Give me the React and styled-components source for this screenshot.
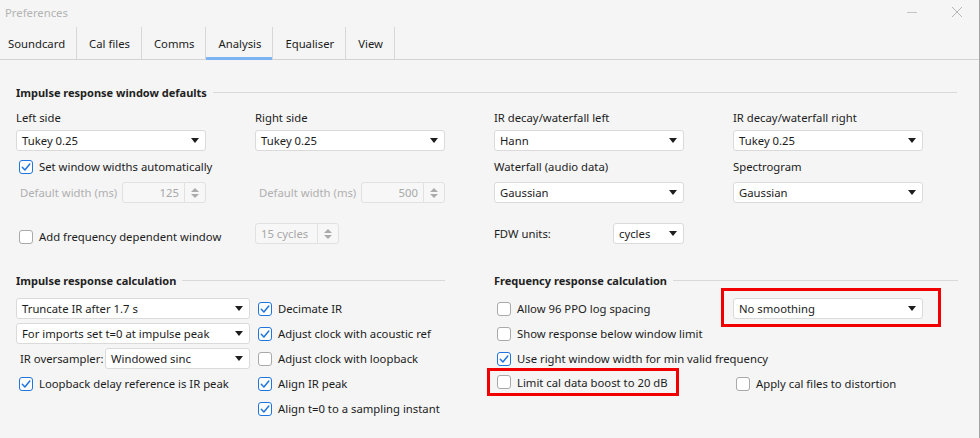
import React from "react";
import styled, { createGlobalStyle, css } from "styled-components";

const GlobalStyle = createGlobalStyle`
  html, body {
    margin: 0;
    padding: 0;
    background: #f5f5f5;
  }
  body {
    font-family: "Noto Sans", "Open Sans", sans-serif;
    font-size: 11.3px;
    color: #1c1c1c;
  }
`;

const Window = styled.div`
  width: 980px;
  height: 438px;
  box-sizing: border-box;
  background: #f5f5f5;
  border-right: 1px solid #a3a3a3;
  overflow: hidden;
`;

const TitleBar = styled.div`
  height: 27px;
  box-sizing: border-box;
  display: flex;
  align-items: center;
  justify-content: space-between;
  padding: 0 16px 3px 5px;
`;

const Title = styled.span`
  color: #b3b3b3;
`;

const WinButtons = styled.div`
  display: flex;
  align-items: center;
  gap: 33px;
`;

const Tabs = styled.div`
  display: flex;
  height: 33px;
  border-bottom: 1px solid #d3d3d3;
  box-sizing: border-box;
`;

const Tab = styled.div`
  position: relative;
  display: flex;
  align-items: center;
  padding: 0 11px 0 12px;
  border-right: 1px solid #d7d7d7;
  color: #1c1c1c;

  &:first-child {
    padding-left: 8px;
  }

  ${(p) =>
    p.$active &&
    css`
      &::after {
        content: "";
        position: absolute;
        left: 0;
        right: 0;
        bottom: -1px;
        height: 3px;
        background: #7cb3f3;
      }
    `}
`;

const Content = styled.div`
  padding: 23px 22px 0 16px;
`;

const SectionHeader = styled.div`
  display: flex;
  align-items: center;
  gap: 6px;
  height: 18px;
  font-weight: 700;
  font-size: 11px;
  color: #222;
  margin-bottom: ${(p) => p.$gap || 6}px;

  &::after {
    content: "";
    flex: 1;
    height: 1px;
    background: #d9d9d9;
  }
`;

const TopGrid = styled.div`
  display: grid;
  grid-template-columns: repeat(4, 190px);
  grid-template-rows: 23px 21px 31px 21px 41px;
  column-gap: 49px;
`;

const Cell = styled.div`
  display: flex;
  align-items: ${(p) => p.$align || "center"};
  justify-content: ${(p) => (p.$spread ? "space-between" : "flex-start")};
  grid-column: ${(p) => p.$span || "auto"};
  min-width: 0;
`;

const Label = styled.span`
  line-height: 21px;
  white-space: nowrap;
  color: ${(p) => (p.$disabled ? "#b0b0b0" : "#1c1c1c")};
  padding-left: ${(p) => p.$indent || 0}px;
`;

const BottomRow = styled.div`
  display: grid;
  grid-template-columns: 429px 464px;
  column-gap: 49px;
  margin-top: 27px;
`;

const CalcGrid = styled.div`
  display: grid;
  grid-template-columns: 239px 190px;
  grid-auto-rows: 25px;
  align-items: center;
`;

const SelectBox = styled.div`
  display: flex;
  align-items: center;
  justify-content: space-between;
  box-sizing: border-box;
  width: ${(p) => p.$w || 190}px;
  height: 21px;
  padding: 0 6px 0 5px;
  background: #fff;
  border: 1px solid #dadada;
  border-radius: 3px;
  white-space: nowrap;
`;

const Arrow = styled.span`
  width: 0;
  height: 0;
  border-left: 4px solid transparent;
  border-right: 4px solid transparent;
  border-top: 5px solid #1e1e1e;
  flex-shrink: 0;
`;

const Select = ({ value, w }) => (
  <SelectBox $w={w}>
    <span>{value}</span>
    <Arrow />
  </SelectBox>
);

const SpinBox = styled.div`
  display: flex;
  box-sizing: border-box;
  width: 84px;
  height: 21px;
  background: #f7f7f7;
  border: 1px solid #e1e1e1;
  border-radius: 3px;
  color: #a8a8a8;
`;

const SpinValue = styled.span`
  flex: 1;
  display: flex;
  align-items: center;
  justify-content: ${(p) => (p.$left ? "flex-start" : "flex-end")};
  padding: 0 5px;
`;

const SpinArrows = styled.span`
  width: 20px;
  border-left: 1px solid #e1e1e1;
  display: flex;
  flex-direction: column;
  align-items: center;
  justify-content: center;
  gap: 2px;

  &::before,
  &::after {
    content: "";
    width: 0;
    height: 0;
    border-left: 4px solid transparent;
    border-right: 4px solid transparent;
  }
  &::before {
    border-bottom: 4px solid #ababab;
  }
  &::after {
    border-top: 4px solid #ababab;
  }
`;

const Spin = ({ value, left }) => (
  <SpinBox>
    <SpinValue $left={left}>{value}</SpinValue>
    <SpinArrows />
  </SpinBox>
);

const CheckRow = styled.label`
  display: flex;
  align-items: center;
  gap: 6px;
  padding-left: 3px;
  white-space: nowrap;
  grid-column: ${(p) => p.$span || "auto"};
`;

const Box = styled.span`
  width: 14px;
  height: 14px;
  box-sizing: border-box;
  border-radius: 3px;
  background: #fff;
  border: 1px solid ${(p) => (p.$checked ? "#1f74de" : "#a9a9a9")};
  display: flex;
  align-items: center;
  justify-content: center;
  flex-shrink: 0;
`;

const Check = ({ checked, children, span }) => (
  <CheckRow $span={span}>
    <Box $checked={checked}>
      {checked && (
        <svg width="12" height="12" viewBox="0 0 12 12">
          <path
            d="M2.3 6.3 L4.9 9 L9.8 3"
            fill="none"
            stroke="#1f74de"
            strokeWidth="1.5"
            strokeLinecap="round"
            strokeLinejoin="round"
          />
        </svg>
      )}
    </Box>
    <span>{children}</span>
  </CheckRow>
);

const Highlight = styled.div`
  position: relative;
  display: inline-flex;

  &::after {
    content: "";
    position: absolute;
    top: ${(p) => p.$t}px;
    right: ${(p) => p.$r}px;
    bottom: ${(p) => p.$b}px;
    left: ${(p) => p.$l}px;
    border: 3px solid #f20000;
    pointer-events: none;
  }
`;

const tabs = ["Soundcard", "Cal files", "Comms", "Analysis", "Equaliser", "View"];

export default function App() {
  return (
    <>
      <GlobalStyle />
      <Window>
        <TitleBar>
          <Title>Preferences</Title>
          <WinButtons>
            <svg width="12" height="12" viewBox="0 0 12 12">
              <path d="M1 6.5 H11" stroke="#c4c4c4" strokeWidth="1" />
            </svg>
            <svg width="12" height="12" viewBox="0 0 12 12">
              <path d="M1 1 L11 11 M11 1 L1 11" stroke="#b5b5b5" strokeWidth="1" />
            </svg>
          </WinButtons>
        </TitleBar>

        <Tabs>
          {tabs.map((t) => (
            <Tab key={t} $active={t === "Analysis"}>
              {t}
            </Tab>
          ))}
        </Tabs>

        <Content>
          <SectionHeader>Impulse response window defaults</SectionHeader>
          <TopGrid>
            <Cell $align="flex-start"><Label>Left side</Label></Cell>
            <Cell $align="flex-start"><Label>Right side</Label></Cell>
            <Cell $align="flex-start"><Label>IR decay/waterfall left</Label></Cell>
            <Cell $align="flex-start"><Label>IR decay/waterfall right</Label></Cell>

            <Cell><Select value="Tukey 0.25" /></Cell>
            <Cell><Select value="Tukey 0.25" /></Cell>
            <Cell><Select value="Hann" /></Cell>
            <Cell><Select value="Tukey 0.25" /></Cell>

            <Cell $span="1 / 3">
              <Check checked>Set window widths automatically</Check>
            </Cell>
            <Cell><Label>Waterfall (audio data)</Label></Cell>
            <Cell><Label>Spectrogram</Label></Cell>

            <Cell $spread>
              <Label $disabled $indent={4}>Default width (ms)</Label>
              <Spin value="125" />
            </Cell>
            <Cell $spread>
              <Label $disabled $indent={4}>Default width (ms)</Label>
              <Spin value="500" />
            </Cell>
            <Cell><Select value="Gaussian" /></Cell>
            <Cell><Select value="Gaussian" /></Cell>

            <Cell $align="flex-end">
              <Check>Add frequency dependent window</Check>
            </Cell>
            <Cell $align="flex-end">
              <Spin value="15 cycles" left />
            </Cell>
            <Cell $align="flex-end" $spread>
              <Label>FDW units:</Label>
              <Select value="cycles" w={71} />
            </Cell>
            <Cell />
          </TopGrid>

          <BottomRow>
            <div>
              <SectionHeader $gap={7}>Impulse response calculation</SectionHeader>
              <CalcGrid>
                <Select value="Truncate IR after 1.7 s" w={234} />
                <Check checked>Decimate IR</Check>
                <Select value="For imports set t=0 at impulse peak" w={234} />
                <Check checked>Adjust clock with acoustic ref</Check>
                <Cell $spread style={{ width: 234 }}>
                  <Label $indent={4}>IR oversampler:</Label>
                  <Select value="Windowed sinc" w={145} />
                </Cell>
                <Check>Adjust clock with loopback</Check>
                <Check checked>Loopback delay reference is IR peak</Check>
                <Check checked>Align IR peak</Check>
                <div />
                <Check checked>Align t=0 to a sampling instant</Check>
              </CalcGrid>
            </div>

            <div>
              <SectionHeader $gap={7}>Frequency response calculation</SectionHeader>
              <CalcGrid>
                <Check>Allow 96 PPO log spacing</Check>
                <div>
                  <Highlight $t={-10} $r={-18} $b={-8} $l={-12}>
                    <Select value="No smoothing" />
                  </Highlight>
                </div>
                <Check span="1 / 3">Show response below window limit</Check>
                <Check checked span="1 / 3">
                  Use right window width for min valid frequency
                </Check>
                <div>
                  <Highlight $t={-7} $r={-11} $b={-6} $l={-7}>
                    <Check>Limit cal data boost to 20 dB</Check>
                  </Highlight>
                </div>
                <Check>Apply cal files to distortion</Check>
              </CalcGrid>
            </div>
          </BottomRow>
        </Content>
      </Window>
    </>
  );
}
